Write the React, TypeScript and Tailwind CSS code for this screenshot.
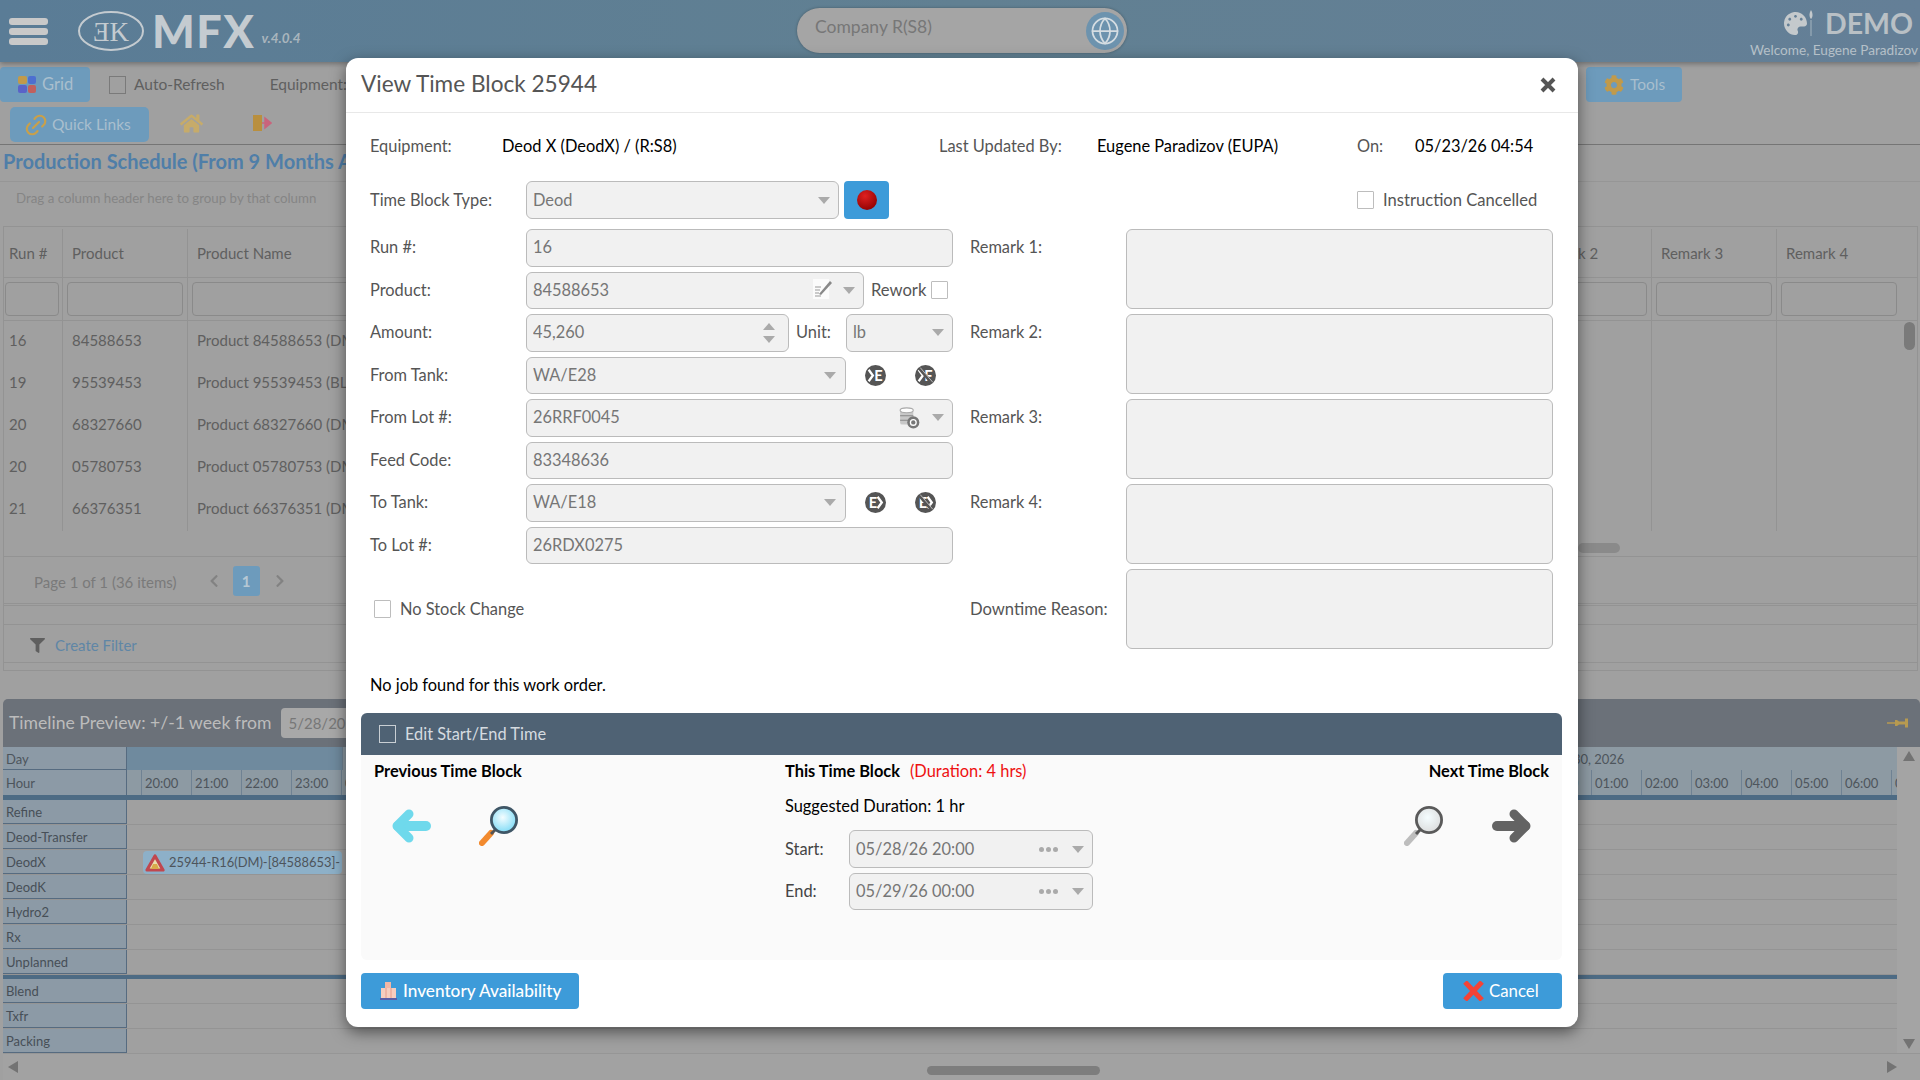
import React from "react";
import { FaCog, FaFilter, FaHome, FaPalette, FaChevronLeft, FaChevronRight } from "react-icons/fa";
import { Globe, Link2 } from "lucide-react";

const Caret = ({ className = "" }: { className?: string }) => (
  <svg width="12" height="7" viewBox="0 0 12 7" className={className}>
    <path d="M0 0H12L6 7Z" fill="#aaaaaa" />
  </svg>
);

const Check = ({ className = "" }: { className?: string }) => (
  <span className={`block w-[17px] h-[18px] shrink-0 border border-[#bdbdbd] bg-white rounded-[1px] ${className}`} />
);

const Field = ({ value, className = "", children }: { value?: string; className?: string; children?: React.ReactNode }) => (
  <div className={`h-[37.5px] flex items-center pl-[6px] pr-[8px] bg-[#f1f1f1] border border-[#bbbbbb] rounded-[6px] text-[#767676] text-[16.4px] ${className}`}>
    <span className="flex-1 truncate">{value}</span>
    {children}
  </div>
);

const Label = ({ children, className = "" }: { children: React.ReactNode; className?: string }) => (
  <span className={`w-[156px] shrink-0 text-[#555555] text-[16.4px] ${className}`}>{children}</span>
);

const TankIcon = ({ text, off, rev }: { text: string; off?: boolean; rev?: boolean }) => (
  <svg width="21" height="21" viewBox="0 0 20 20">
    <circle cx="10" cy="10" r="10" fill="#555555" />
    <path d={rev ? "M12 4.5L16 10L12 15.5" : "M3.5 4.5L7.5 10L3.5 15.5"} fill="none" stroke="#fff" strokeWidth="2.2" />
    <text x={rev ? "7.5" : "12.8"} y="15" textAnchor="middle" fontSize="14" fontWeight="700" fill="#fff" fontFamily="Lato, sans-serif">{text}</text>
    {off && <path d="M4 3L16 17" stroke="#555555" strokeWidth="3" />}
    {off && <path d="M5 2.5L17 16.5" stroke="#cfcfcf" strokeWidth="0.8" />}
  </svg>
);

const Arrow = ({ color, right }: { color: string; right?: boolean }) => (
  <svg width="40" height="34" viewBox="0 0 40 34" className={right ? "" : "-scale-x-100"}>
    <path d="M5 17H33" stroke={color} strokeWidth="10" strokeLinecap="round" />
    <path d="M22 5L34 17L22 29" fill="none" stroke={color} strokeWidth="9" strokeLinecap="round" strokeLinejoin="round" />
  </svg>
);

const Magnifier = ({ id, glass, ring, handle }: { id: string; glass: string; ring: string; handle: string }) => (
  <svg width="40" height="40" viewBox="0 0 40 40">
    <defs>
      <radialGradient id={id} cx="0.45" cy="0.4" r="0.7">
        <stop offset="0" stopColor="#f4fdff" />
        <stop offset="1" stopColor={glass} />
      </radialGradient>
    </defs>
    <path d="M3 37L12 27" stroke={handle} strokeWidth="6" strokeLinecap="round" />
    <path d="M12 28L17 23" stroke="#555" strokeWidth="3" />
    <circle cx="25" cy="14" r="12.6" fill={`url(#${id})`} stroke={ring} strokeWidth="2.8" />
  </svg>
);

const DotsCaret = () => (
  <div className="flex items-center gap-[14px]">
    <div className="flex gap-[2px]">
      <span className="w-[5px] h-[5px] rounded-full bg-[#aaaaaa]" />
      <span className="w-[5px] h-[5px] rounded-full bg-[#aaaaaa]" />
      <span className="w-[5px] h-[5px] rounded-full bg-[#aaaaaa]" />
    </div>
    <Caret />
  </div>
);

const rows = [
  ["16", "84588653", "Product 84588653 (DM)"],
  ["19", "95539453", "Product 95539453 (BL)"],
  ["20", "68327660", "Product 68327660 (DM)"],
  ["20", "05780753", "Product 05780753 (DM)"],
  ["21", "66376351", "Product 66376351 (DM)"],
];

const groupA = ["Refine", "Deod-Transfer", "DeodX", "DeodK", "Hydro2", "Rx", "Unplanned"];
const groupB = ["Blend", "Txfr", "Packing"];
const hours = Array.from({ length: 36 }, (_, i) => `${String((20 + i) % 24).padStart(2, "0")}:00`);
const colsRight = ["Remark 1", "Remark 2", "Remark 3", "Remark 4"];

const TimelineRow = ({ name, event }: { name: string; event?: boolean }) => (
  <div className="flex h-[25px] border-b border-[#949494]">
    <div className="w-[124px] shrink-0 bg-[#8c9aa6] border-r border-b border-[#566b80] pl-[3px] text-[13px] leading-[24px] text-[#474f57]">{name}</div>
    {event && (
      <div className="ml-[16px] mt-[1px] w-[199px] h-[23px] flex items-center pl-[2px] bg-[#8db0c8] rounded-[4px] text-[12.9px] text-[#4d555c] whitespace-nowrap overflow-hidden">
        <svg width="20" height="18" viewBox="0 0 20 18" className="shrink-0 mr-[4px]">
          <path d="M10 2L18 16H2Z" fill="#e9dcae" stroke="#c0474f" strokeWidth="3.2" strokeLinejoin="round" />
          <path d="M6 15H14L12 10H8Z" fill="#d9a84a" />
        </svg>
        25944-R16(DM)-[84588653]-
      </div>
    )}
  </div>
);

export default function App() {
  return (
    <div className="relative w-[1920px] h-[1080px] overflow-hidden bg-[#a0a0a0] [font-family:Lato,sans-serif] text-[15px]">
      {/* Top bar */}
      <header className="relative h-[62px] flex items-center bg-gradient-to-r from-[#5a7c96] via-[#618092] to-[#647f97] shadow-[0_2px_5px_rgba(0,0,0,0.3)]">
        <div className="ml-[9px] w-[39px] flex flex-col gap-[3px]">
          <span className="h-[7px] rounded-[3px] bg-[#c9c9c9]" />
          <span className="h-[7px] rounded-[3px] bg-[#c9c9c9]" />
          <span className="h-[7px] rounded-[3px] bg-[#c9c9c9]" />
        </div>
        <svg width="68" height="42" viewBox="0 0 68 42" className="ml-[29px]">
          <ellipse cx="34" cy="21" rx="32" ry="19" fill="none" stroke="#c4cbd0" strokeWidth="2" />
          <text x="34" y="31" textAnchor="middle" fontSize="27" fill="#c4cbd0" fontFamily="Liberation Serif, serif">ƎK</text>
        </svg>
        <span className="ml-[7px] text-[45px] font-black leading-none text-[#c4cbd0] tracking-[1.5px]">MFX</span>
        <span className="ml-[6px] mt-[14px] text-[13.5px] font-bold italic text-[#a9b5bd]">v.4.0.4</span>
        <div className="absolute left-[797px] top-[8px] w-[330px] h-[45px] rounded-full bg-[#a5a5a5] flex items-center pl-[18px] pr-[3px] text-[#777777] text-[17.5px] shadow-[0_0_3px_rgba(0,0,0,0.3)]">
          <span className="flex-1 -mt-[6px]">Company R(S8)</span>
          <span className="w-[38px] h-[38px] rounded-full bg-[#6d93ae] flex items-center justify-center">
            <Globe size={30} color="#d5dde2" strokeWidth={1.4} />
          </span>
        </div>
        <div className="absolute right-[2px] top-[6px] flex flex-col items-end">
          <div className="flex items-center pr-[5px]">
            <FaPalette size={23} color="#c4c9cc" />
            <svg width="6" height="26" viewBox="0 0 6 26" className="ml-[1px]">
              <path d="M3 0C5 3 5 7 3 9C1 7 1 3 3 0Z" fill="#c4c9cc" />
              <path d="M3 10V26" stroke="#8fa3b2" strokeWidth="1.5" />
            </svg>
            <span className="ml-[11px] text-[28.5px] font-bold leading-[34px] text-[#b9c0c5]">DEMO</span>
          </div>
          <span className="text-[13.6px] text-[#b5c0c8] leading-[18px] mt-[1px]">Welcome, Eugene Paradizov</span>
        </div>
      </header>

      {/* Toolbars */}
      <div className="pt-[5px] flex items-center h-[40px] text-[#5f5f5f] text-[15.5px]">
        <div className="w-[90px] h-[35px] rounded-[4px] bg-[#6d9bbc] flex items-center pl-[18px] text-[#a9bfce]">
          <div className="grid grid-cols-2 gap-[1px] w-[18px]">
            <span className="h-[8px] rounded-[2px] bg-[#c19a4a]" />
            <span className="h-[8px] rounded-[2px] bg-[#4d6fd0]" />
            <span className="h-[8px] rounded-[2px] bg-[#5a63c8]" />
            <span className="h-[8px] rounded-[2px] bg-[#c0605e]" />
          </div>
          <span className="ml-[6px] text-[16.5px]">Grid</span>
        </div>
        <span className="ml-[19px] w-[17px] h-[18px] border border-[#7a7a7a]" />
        <span className="ml-[8px]">Auto-Refresh</span>
        <span className="ml-[45px]">Equipment:</span>
        <div className="ml-auto mr-[238px] w-[96px] h-[35px] rounded-[4px] bg-[#6d9bbc] flex items-center pl-[18px] text-[#a9bfce]">
          <FaCog size={20} color="#c19a4a" />
          <span className="ml-[6px]">Tools</span>
        </div>
      </div>
      <div className="mt-[5px] pl-[10px] flex items-center h-[35px]">
        <div className="w-[139px] h-[35px] rounded-[5px] bg-[#6d9bbc] flex items-center pl-[13px] text-[#a9bfce] text-[15.5px]">
          <Link2 size={26} color="#c9a04a" className="-rotate-45" />
          <span className="ml-[3px]">Quick Links</span>
        </div>
        <FaHome size={23} color="#c6ab6a" className="ml-[31px] -mt-[3px]" />
        <svg width="20" height="20" viewBox="0 0 20 20" className="ml-[49px] -mt-[3px]">
          <path d="M1 2H10V18H1Z" fill="#b98f3e" />
          <path d="M10 10H15M13 5L19 10L13 15Z" fill="#c9647c" stroke="#c9647c" strokeWidth="1.5" />
        </svg>
      </div>
      <div className="mt-[2px] h-px bg-[#757575]" />
      <div className="h-[36px] pl-[3px] pb-[4px] flex items-center text-[20px] font-bold text-[#4f7ea8] whitespace-nowrap">Production Schedule (From 9 Months Ago)</div>
      <div className="h-[45px] pl-[16px] pb-[11px] flex items-center border-t border-[#969696] text-[13.3px] text-[#858585]">Drag a column header here to group by that column</div>

      {/* Grid */}
      <div className="relative ml-[3px] mr-[2px] border border-[#939393] h-[378px]">
        <div className="flex h-[51px] pt-[2px] border-b border-[#939393] text-[#5f5f5f]">
          <div className="w-[59px] pl-[5px] flex items-center border-r border-[#939393]">Run #</div>
          <div className="w-[125px] pl-[9px] flex items-center border-r border-[#939393]">Product</div>
          <div className="w-[1338px] pl-[9px] flex items-center">Product Name</div>
          {colsRight.slice(1).map((c) => (
            <div key={c} className="w-[125px] pl-[9px] flex items-center border-l border-[#939393]">{c}</div>
          ))}
        </div>
        <div className="flex h-[43px] items-center border-b border-[#939393]">
          <div className="w-[59px] h-full py-[4px] px-[1px] border-r border-[#939393]"><div className="h-full w-[54px] border border-[#8a8a8a] rounded-[4px]" /></div>
          <div className="w-[125px] h-full py-[4px] px-[4px] border-r border-[#939393]"><div className="h-full border border-[#8a8a8a] rounded-[4px]" /></div>
          <div className="w-[1338px] h-full py-[4px] px-[4px]"><div className="h-full w-[1205px] border border-[#8a8a8a] rounded-[4px]" /></div>
          {colsRight.slice(1).map((c) => (
            <div key={c} className="w-[125px] h-full py-[4px] px-[4px] border-l border-[#939393]"><div className="h-full border border-[#8a8a8a] rounded-[4px]" /></div>
          ))}
        </div>
        <div className="h-[219px] flex flex-col">
          {rows.map((r) => (
            <div key={r[1]} className="flex h-[42px] text-[#5f5f5f] items-center">
              <div className="w-[59px] pl-[5px] pb-[3px] self-stretch flex items-center border-r border-[#939393]">{r[0]}</div>
              <div className="w-[125px] pl-[9px] pb-[3px] self-stretch flex items-center border-r border-[#939393]">{r[1]}</div>
              <div className="w-[1338px] pl-[9px] pb-[3px] whitespace-nowrap">{r[2]}</div>
              {colsRight.slice(1).map((c) => (
                <div key={c} className="w-[125px] self-stretch border-l border-[#939393]" />
              ))}
            </div>
          ))}
        </div>
        <div className="absolute right-[2px] top-[95px] w-[11px] h-[28px] rounded-full bg-[#7a7a7a]" />
        <div className="h-[17px] flex items-center justify-end pr-[297px] border-b border-[#939393]">
          <span className="w-[42px] h-[10px] rounded-full bg-[#8a8a8a]" />
        </div>
        <div className="h-[49px] flex items-center pl-[30px] text-[#7a7a7a] border-b border-[#939393]">
          <span className="mt-[3px]">Page 1 of 1 (36 items)</span>
          <FaChevronLeft size={14} color="#828282" className="ml-[30px]" />
          <span className="ml-[12px] w-[27px] h-[30px] rounded-[3px] bg-[#6d9bbc] text-[#b6c8d4] flex items-center justify-center font-bold">1</span>
          <FaChevronRight size={14} color="#828282" className="ml-[13px]" />
        </div>
      </div>
      <div className="ml-[3px] mr-[2px] h-[67px] border-x border-b border-[#939393]">
        <div className="h-[21px] border-b border-[#939393]" />
        <div className="h-[38px] flex items-center pl-[26px] pt-[4px] border-b border-[#939393] text-[#5f86a6]">
          <FaFilter size={15} color="#5f5f5f" />
          <span className="ml-[10px]">Create Filter</span>
        </div>
      </div>

      {/* Timeline */}
      <div className="absolute left-[3px] right-0 top-[699px] bottom-0 flex flex-col">
        <div className="h-[48px] shrink-0 bg-[#6b7179] rounded-t-[5px] flex items-center pl-[6px] pr-[11px] text-[#bcbcbc]">
          <span className="text-[17.6px] whitespace-nowrap">Timeline Preview: +/-1 week from</span>
          <div className="ml-[10px] w-[120px] h-[30px] rounded-[4px] bg-[#a8a8a8] flex items-center pl-[7px] text-[#777777] text-[15px]">5/28/2026</div>
          <svg width="22" height="12" viewBox="0 0 22 12" className="ml-auto">
            <path d="M0 6H9" stroke="#b79a50" strokeWidth="1.5" />
            <path d="M8 3H10L12 4.5H18V1.5H21V10.5H18V7.5H12L10 9H8Z" fill="#b79a50" />
          </svg>
        </div>
        <div className="flex flex-1">
          <div className="w-[1894px] shrink-0 overflow-hidden">
            <div className="flex h-[23px] text-[13px] text-[#4d555c]">
              <div className="w-[124px] shrink-0 bg-[#8c9aa6] border-r border-b border-[#566b80] pl-[3px] leading-[24px]">Day</div>
              <div className="w-[215px] shrink-0 bg-[#6f8a9e]" />
              <div className="flex-1 bg-[#8d9aa3] pl-[1202px] leading-[24px] whitespace-nowrap border-l border-[#6f8293]">May 30, 2026</div>
            </div>
            <div className="flex h-[25px] text-[13px] text-[#4d555c] bg-[#8d9aa3]">
              <div className="w-[124px] shrink-0 bg-[#8c9aa6] border-r border-[#566b80] pl-[3px] leading-[26px]">Hour</div>
              <div className="w-[14px] shrink-0" />
              {hours.map((h, i) => (
                <div key={i} className="w-[50px] shrink-0 border-l border-[#6f8293] pl-[3px] leading-[26px]">{h}</div>
              ))}
            </div>
            <div className="h-[5px] bg-[#4d6b84]" />
            {groupA.map((n) => <TimelineRow key={n} name={n} event={n === "DeodX"} />)}
            <div className="h-[4px] bg-[#4d6b84]" />
            {groupB.map((n) => <TimelineRow key={n} name={n} />)}
          </div>
          <div className="flex-1 flex flex-col items-center justify-between bg-[#a4a4a4] py-[4px] h-[306px]">
            <svg width="12" height="10" viewBox="0 0 12 10"><path d="M0 10H12L6 0Z" fill="#737373" /></svg>
            <svg width="12" height="10" viewBox="0 0 12 10"><path d="M0 0H12L6 10Z" fill="#737373" /></svg>
          </div>
        </div>
        <div className="absolute left-0 right-0 bottom-0 h-[27px] bg-[#a2a2a2] border-t border-[#969696] flex items-center justify-between pl-[5px] pr-[23px]">
          <svg width="10" height="12" viewBox="0 0 10 12"><path d="M10 0V12L0 6Z" fill="#737373" /></svg>
          <span className="absolute left-[924px] top-[12px] w-[173px] h-[9px] rounded-full bg-[#7d7d7d]" />
          <svg width="10" height="12" viewBox="0 0 10 12"><path d="M0 0V12L10 6Z" fill="#737373" /></svg>
        </div>
      </div>

      {/* Modal */}
      <div className="absolute left-[346px] top-[58px] w-[1232px] h-[969px] bg-white rounded-[12px] shadow-[0_5px_15px_rgba(0,0,0,0.5)] flex flex-col">
        <div className="h-[55px] shrink-0 flex items-center justify-between pl-[15px] pr-[22px] border-b border-[#e8e8e8]">
          <h1 className="text-[22.6px] text-[#555555] font-normal -mt-[3px]">View Time Block 25944</h1>
          <svg width="16" height="16" viewBox="0 0 16 16"><path d="M2 2L14 14M14 2L2 14" stroke="#555555" strokeWidth="4" /></svg>
        </div>

        <div className="pl-[15px] pr-[16px] flex-1 flex flex-col">
          <div className="pl-[9px] pr-[9px]">
            <div className="mt-[20px] h-[26px] flex items-center text-[16.4px] whitespace-nowrap">
              <span className="w-[132px] text-[#555555]">Equipment:</span>
              <span className="w-[437px] text-black">Deod X (DeodX) / (R:S8)</span>
              <span className="w-[158px] text-[#555555]">Last Updated By:</span>
              <span className="w-[260px] text-black">Eugene Paradizov (EUPA)</span>
              <span className="w-[58px] text-[#555555]">On:</span>
              <span className="text-black">05/23/26 04:54</span>
            </div>
            <div className="mt-[22px] h-[38px] flex items-center">
              <Label>Time Block Type:</Label>
              <Field value="Deod" className="w-[313px] h-[38px]"><Caret /></Field>
              <div className="ml-[5px] w-[45px] h-[38px] rounded-[4px] bg-[#3d9bd9] flex items-center justify-center">
                <svg width="20" height="20" viewBox="0 0 20 20">
                  <defs>
                    <radialGradient id="redball" cx="0.4" cy="0.3" r="0.8">
                      <stop offset="0" stopColor="#e02020" />
                      <stop offset="1" stopColor="#8a0000" />
                    </radialGradient>
                  </defs>
                  <circle cx="10" cy="10" r="10" fill="url(#redball)" />
                </svg>
              </div>
              <Check className="ml-[468px]" />
              <span className="ml-[9px] text-[16.6px] text-[#555555]">Instruction Cancelled</span>
            </div>

            <div className="mt-[10px] flex gap-[17px]">
              <div className="w-[583px] flex flex-col gap-[5px]">
                <div className="flex items-center">
                  <Label>Run #:</Label>
                  <Field value="16" className="flex-1" />
                </div>
                <div className="flex items-center">
                  <Label>Product:</Label>
                  <Field value="84588653" className="w-[338px]">
                    <svg width="20" height="20" viewBox="0 0 20 20" className="mr-[10px] -mt-[3px]">
                      <rect x="0" y="0" width="16" height="20" fill="#fbfbfb" />
                      <path d="M2 8H8M2 11H7M2 14H6M2 17H8" stroke="#999" strokeWidth="1" />
                      <path d="M6 15L17 2L19 4L8 16Z" fill="#888" />
                    </svg>
                    <Caret />
                  </Field>
                  <span className="ml-[7px] text-[16.6px] text-[#555555]">Rework</span>
                  <Check className="ml-[5px]" />
                </div>
                <div className="flex items-center">
                  <Label>Amount:</Label>
                  <Field value="45,260" className="w-[263px]">
                    <div className="flex flex-col gap-[6px] mr-[5px]">
                      <Caret className="rotate-180" />
                      <Caret />
                    </div>
                  </Field>
                  <span className="ml-[7px] w-[50px] text-[16.4px] text-[#555555]">Unit:</span>
                  <Field value="lb" className="flex-1"><Caret /></Field>
                </div>
                <div className="flex items-center">
                  <Label>From Tank:</Label>
                  <Field value="WA/E28" className="w-[320px]"><Caret className="mr-[1px]" /></Field>
                  <span className="ml-[19px]"><TankIcon text="E" /></span>
                  <span className="ml-[29px]"><TankIcon text="F" off /></span>
                </div>
                <div className="flex items-center">
                  <Label>From Lot #:</Label>
                  <Field value="26RRF0045" className="flex-1">
                    <svg width="22" height="22" viewBox="0 0 20 20" className="mr-[11px]">
                      <rect x="1" y="2" width="12" height="14" rx="2" fill="#c8c8c8" />
                      <ellipse cx="7" cy="3" rx="6" ry="2.2" fill="#fff" stroke="#aaa" />
                      <path d="M1 8H13M1 12H13" stroke="#888" />
                      <circle cx="13" cy="14" r="5.5" fill="#777" />
                      <circle cx="13" cy="14" r="2.6" fill="none" stroke="#fff" strokeWidth="1.2" />
                    </svg>
                    <Caret />
                  </Field>
                </div>
                <div className="flex items-center">
                  <Label>Feed Code:</Label>
                  <Field value="83348636" className="flex-1" />
                </div>
                <div className="flex items-center">
                  <Label>To Tank:</Label>
                  <Field value="WA/E18" className="w-[320px]"><Caret className="mr-[1px]" /></Field>
                  <span className="ml-[19px]"><TankIcon text="E" rev /></span>
                  <span className="ml-[29px]"><TankIcon text="E" rev off /></span>
                </div>
                <div className="flex items-center">
                  <Label>To Lot #:</Label>
                  <Field value="26RDX0275" className="flex-1" />
                </div>
                <div className="h-[80px] flex items-center pl-[4px]">
                  <Check />
                  <span className="ml-[9px] text-[16.4px] text-[#555555]">No Stock Change</span>
                </div>
              </div>

              <div className="flex-1 flex flex-col gap-[5px]">
                {colsRight.map((r) => (
                  <div key={r} className="flex items-start">
                    <Label className="mt-[6px]">{r}:</Label>
                    <div className="flex-1 h-[80px] rounded-[6px] bg-[#f1f1f1] border border-[#bbbbbb]" />
                  </div>
                ))}
                <div className="flex items-center">
                  <span className="w-[156px] shrink-0 text-[#555555] text-[16.6px]">Downtime Reason:</span>
                  <div className="flex-1 h-[80px] rounded-[6px] bg-[#f1f1f1] border border-[#bbbbbb]" />
                </div>
              </div>
            </div>

            <p className="mt-[24px] h-[24px] leading-[24px] text-[16.4px] text-black">No job found for this work order.</p>
          </div>

          <div className="mt-[16px] h-[42px] shrink-0 bg-[#4f6274] rounded-t-[6px] flex items-center pl-[18px]">
            <span className="w-[17px] h-[18px] border border-[#c9cfd4]" />
            <span className="ml-[9px] text-[16.4px] text-[#d5dbe0]">Edit Start/End Time</span>
          </div>
          <div className="h-[205px] shrink-0 bg-[#fafafa] rounded-b-[6px] flex px-[13px] pt-[5px]">
            <div className="w-[411px]">
              <div className="h-[22px] leading-[22px] text-[16.4px] font-bold text-black">Previous Time Block</div>
              <div className="mt-[24px] flex items-center">
                <span className="ml-[17px]"><Arrow color="#6fd9ec" /></span>
                <span className="ml-[48px]"><Magnifier id="magblue" glass="#6ed6f5" ring="#3f5666" handle="#f28a2e" /></span>
              </div>
            </div>
            <div className="w-[308px]">
              <div className="h-[22px] leading-[22px] text-[16.4px] text-black whitespace-nowrap">
                <span className="font-bold">This Time Block</span>
                <span className="ml-[10px] text-[#ee1111]">(Duration: 4 hrs)</span>
              </div>
              <div className="mt-[13px] h-[22px] leading-[22px] text-[16.4px] text-black">Suggested Duration: 1 hr</div>
              <div className="mt-[13px] flex items-center">
                <span className="w-[64px] text-[16.4px] text-[#444444]">Start:</span>
                <Field value="05/28/26 20:00" className="w-[244px] h-[38px]"><DotsCaret /></Field>
              </div>
              <div className="mt-[5px] flex items-center">
                <span className="w-[64px] text-[16.4px] text-[#444444]">End:</span>
                <Field value="05/29/26 00:00" className="w-[244px] h-[37px]"><DotsCaret /></Field>
              </div>
            </div>
            <div className="flex-1 flex flex-col items-end">
              <div className="h-[22px] leading-[22px] text-[16.4px] font-bold text-black">Next Time Block</div>
              <div className="mt-[24px] mr-[17px] flex items-center gap-[48px]">
                <Magnifier id="maggray" glass="#d8d8d8" ring="#5a5a5a" handle="#bdbdbd" />
                <Arrow color="#636363" right />
              </div>
            </div>
          </div>

          <div className="mt-[13px] flex justify-between">
            <div className="w-[218px] h-[36px] rounded-[4px] bg-[#3d9bd9] flex items-center pl-[19px] text-white text-[17.2px] font-medium whitespace-nowrap">
              <svg width="17" height="20" viewBox="0 0 17 20">
                <rect x="5" y="1" width="6" height="7" fill="#f3b7a6" />
                <rect x="1" y="7" width="15" height="10" fill="#f7cdbf" />
                <path d="M6 7V17M11 7V17" stroke="#e59c8c" />
                <path d="M0 18H17" stroke="#5a5fa8" strokeWidth="2" />
              </svg>
              <span className="ml-[6px]">Inventory Availability</span>
            </div>
            <div className="w-[119px] h-[36px] rounded-[4px] bg-[#3d9bd9] flex items-center pl-[20px] text-white text-[16.8px]">
              <svg width="21" height="20" viewBox="0 0 21 20"><path d="M2 1L19 19M19 1L2 19" stroke="#f44336" strokeWidth="5" /></svg>
              <span className="ml-[5px]">Cancel</span>
            </div>
          </div>
        </div>
      </div>
    </div>
  );
}
